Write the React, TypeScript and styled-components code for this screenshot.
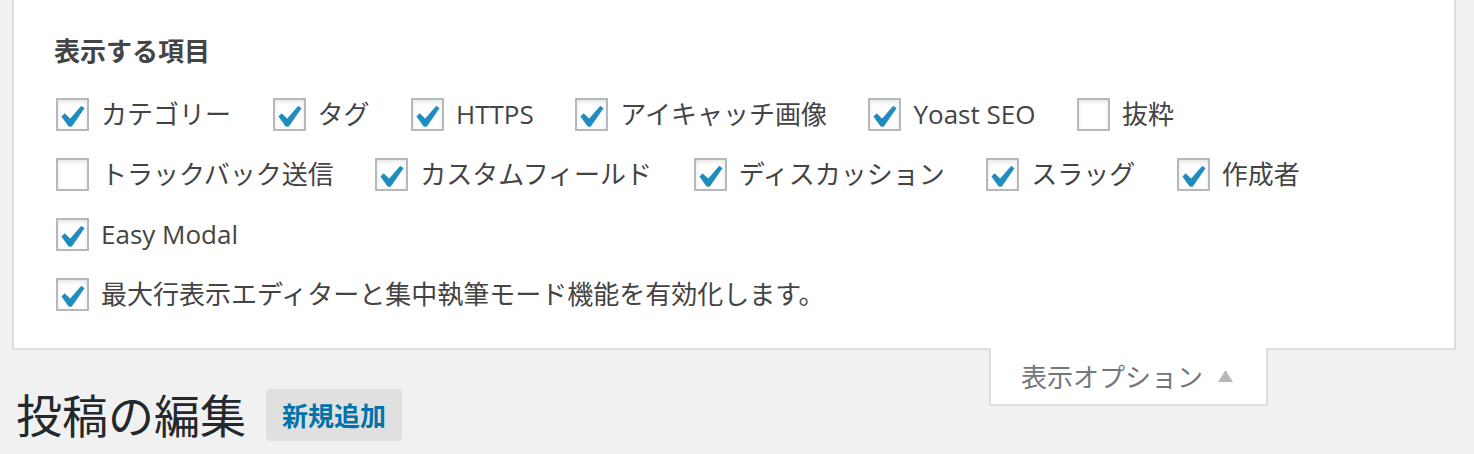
import React from "react";
import styled, { createGlobalStyle } from "styled-components";

const Global = createGlobalStyle`
  html, body {
    margin: 0;
    padding: 0;
    background: #f1f1f1;
    font-family: "Open Sans", "Noto Sans CJK JP", sans-serif;
    color: #444;
  }
  * { box-sizing: border-box; }
`;

const Page = styled.div`
  width: 1474px;
  height: 454px;
  overflow: hidden;
  padding: 0 18px 0 12px;
`;

const Panel = styled.div`
  background: #fff;
  border: 2px solid #dddddd;
  border-top: none;
  height: 350px;
  padding: 33px 40px 0 40px;
`;

const Heading = styled.h5`
  margin: 0 0 15px 0;
  font-size: 26px;
  line-height: 36px;
  font-weight: 700;
  color: #444;
`;

const Row = styled.div`
  display: flex;
  align-items: center;
  gap: 41.5px;
  height: 60px;
  padding-left: 2px;
`;

const Item = styled.label`
  display: flex;
  align-items: center;
  font-size: 26px;
  line-height: 36px;
  color: #444;
  white-space: nowrap;
`;

const Box = styled.span`
  width: 33px;
  height: 33px;
  border: 2px solid #b4b9be;
  background: #fff;
  box-shadow: inset 0 2px 4px rgba(0, 0, 0, 0.1);
  margin-right: 12px;
  display: flex;
  flex: none;
`;

const Check = styled.svg`
  width: 29px;
  height: 29px;
  display: block;
`;

const Below = styled.div`
  display: flex;
  justify-content: space-between;
  align-items: flex-start;
`;

const TitleRow = styled.div`
  display: flex;
  align-items: center;
  margin-top: 35px;
  padding-left: 4px;
  height: 60px;
`;

const Title = styled.h1`
  margin: 0;
  font-size: 46px;
  line-height: 60px;
  font-weight: 400;
  color: #23282d;
`;

const AddButton = styled.a`
  margin-left: 20px;
  height: 52px;
  padding: 0 16px;
  display: flex;
  align-items: center;
  background: #e0e0e0;
  border-radius: 4px;
  font-size: 26px;
  font-weight: 700;
  color: #0073aa;
  text-decoration: none;
`;

const Tab = styled.div`
  position: relative;
  z-index: 1;
  margin-top: -2px;
  margin-right: 188px;
  width: 279px;
  height: 58px;
  background: #fff;
  border: 2px solid #dddddd;
  border-top: none;
  display: flex;
  align-items: center;
  padding-left: 30px;
  font-size: 26px;
  color: #72777c;
  white-space: nowrap;
`;

const Arrow = styled.svg`
  width: 15px;
  height: 12px;
  margin-left: 15px;
  display: block;
`;

type ItemDef = [string, boolean];

const rows: ItemDef[][] = [
  [
    ["カテゴリー", true],
    ["タグ", true],
    ["HTTPS", true],
    ["アイキャッチ画像", true],
    ["Yoast SEO", true],
    ["抜粋", false],
  ],
  [
    ["トラックバック送信", false],
    ["カスタムフィールド", true],
    ["ディスカッション", true],
    ["スラッグ", true],
    ["作成者", true],
  ],
  [["Easy Modal", true]],
  [["最大行表示エディターと集中執筆モード機能を有効化します。", true]],
];

const Checkbox = ({ checked }: { checked: boolean }) => (
  <Box>
    {checked && (
      <Check viewBox="4 2 13.5 13.5">
        <path
          d="M14.83 4.89l1.34.94-5.81 8.38H9.02L5.78 9.67l1.34-1.25 2.57 2.4z"
          fill="#1e8cbe"
          stroke="#1e8cbe"
          strokeWidth="0.35"
          strokeLinejoin="round"
        />
      </Check>
    )}
  </Box>
);

export default function App() {
  return (
    <>
      <Global />
      <Page>
        <Panel>
          <Heading>表示する項目</Heading>
          {rows.map((row, i) => (
            <Row key={i}>
              {row.map(([label, checked]) => (
                <Item key={label}>
                  <Checkbox checked={checked} />
                  {label}
                </Item>
              ))}
            </Row>
          ))}
        </Panel>
        <Below>
          <TitleRow>
            <Title>投稿の編集</Title>
            <AddButton href="#">新規追加</AddButton>
          </TitleRow>
          <Tab>
            表示オプション
            <Arrow viewBox="0 0 15 12">
              <polygon points="7.5,0 15,12 0,12" fill="#b4b9be" />
            </Arrow>
          </Tab>
        </Below>
      </Page>
    </>
  );
}
